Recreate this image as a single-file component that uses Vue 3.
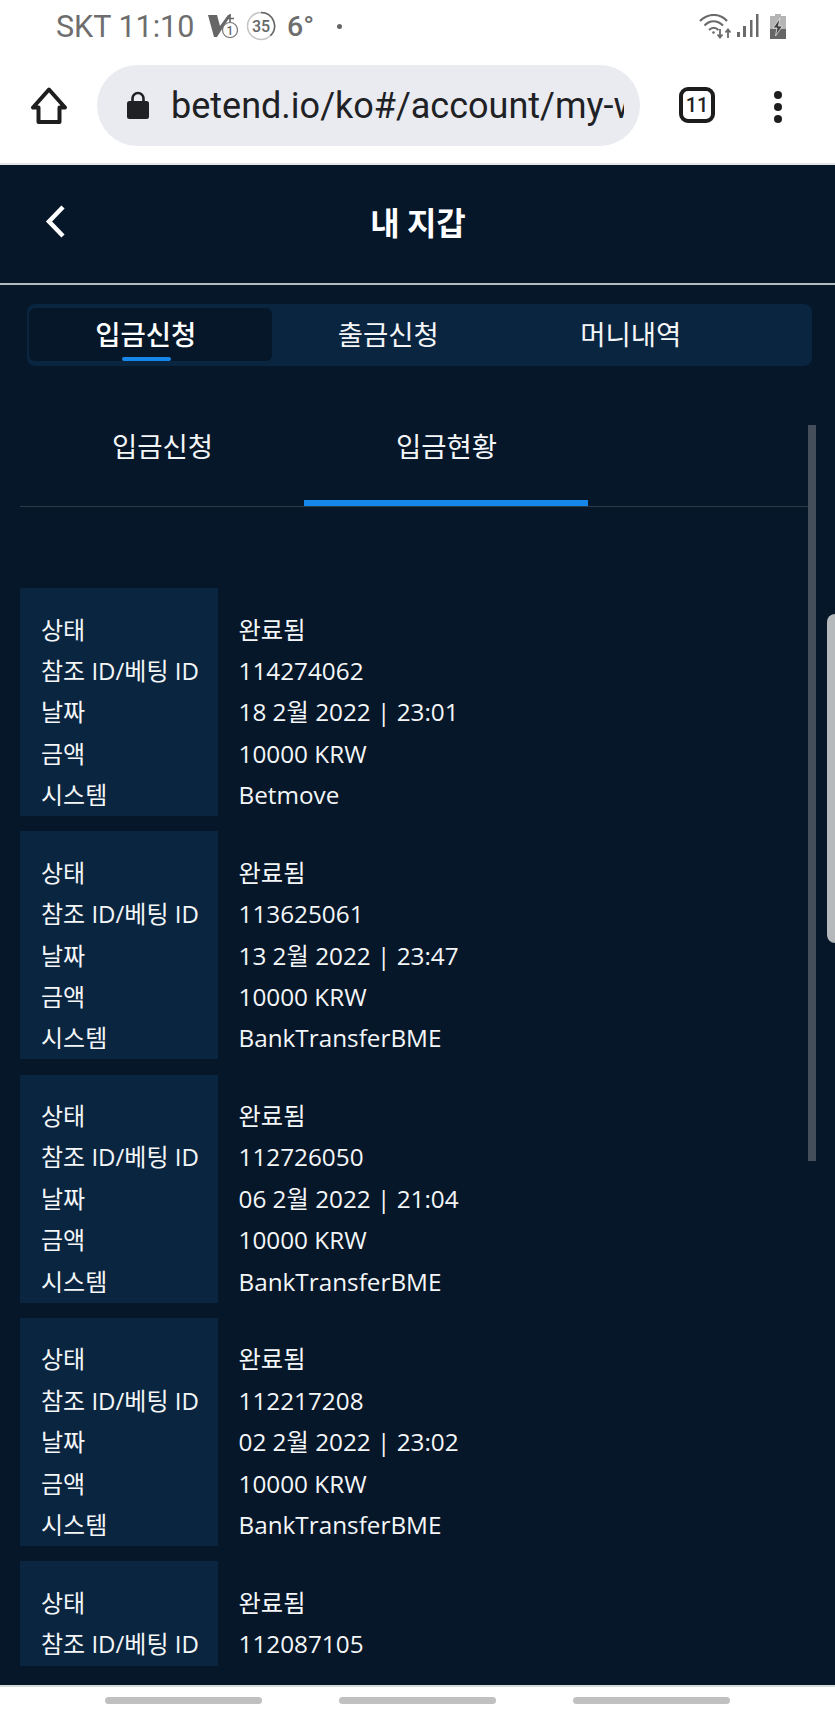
<script setup>
const mainTabs = ['입금신청', '출금신청', '머니내역']
const subTabs = ['입금신청', '입금현황']
const labels = ['상태', '참조 ID/베팅 ID', '날짜', '금액', '시스템']
const deposits = [
  ['완료됨', '114274062', '18 2월 2022 | 23:01', '10000 KRW', 'Betmove'],
  ['완료됨', '113625061', '13 2월 2022 | 23:47', '10000 KRW', 'BankTransferBME'],
  ['완료됨', '112726050', '06 2월 2022 | 21:04', '10000 KRW', 'BankTransferBME'],
  ['완료됨', '112217208', '02 2월 2022 | 23:02', '10000 KRW', 'BankTransferBME'],
  ['완료됨', '112087105']
]
</script>

<template>
  <div class="phone">
    <div class="status">
      <span class="carrier">SKT 11:10</span>
      <svg class="volte" width="30" height="24" viewBox="0 0 30 24">
        <path d="M0 1h9l3 11L20 1h3L9 23H6z" fill="#666" />
        <path d="M22 0v9M18 4.500h8" stroke="#666" stroke-width="1.600" />
        <circle cx="22" cy="16" r="7.500" fill="#fff" stroke="#777" stroke-width="1.200" />
        <text x="22" y="20.500" text-anchor="middle" class="svg-num small">1</text>
      </svg>
      <svg class="ring" width="30" height="30" viewBox="0 0 30 30">
        <circle cx="15" cy="15" r="13.500" fill="none" stroke="#c4c4c4" stroke-width="1.500" />
        <path d="M15 1.500A13.500 13.500 0 0 1 24.500 24.600" fill="none" stroke="#666" stroke-width="1.500" />
        <text x="15" y="21" text-anchor="middle" class="svg-num">35</text>
      </svg>
      <span class="temp">6°</span>
      <span class="dot"></span>
      <span class="spacer"></span>
      <svg width="33" height="25" viewBox="0 0 33 25" fill="none" stroke="#6a6a6a" stroke-width="2.200">
        <path d="M1 7C9 -1 21 -1 28 7" />
        <path d="M5.500 11.500C11 6 18 6 24 11.500" />
        <path d="M10 16C13 13 16.500 13 19.500 16" />
        <circle cx="14.500" cy="18.500" r="1.300" fill="#6a6a6a" stroke="none" />
        <path d="M21 15v8M18.500 20.500l2.500 3 2.500-3M29 24v-8M26.500 18.500l2.500-3 2.500 3" stroke-width="1.800" />
      </svg>
      <svg class="bars" width="22" height="24" viewBox="0 0 22 24" fill="#6a6a6a">
        <rect x="0" y="18" width="3" height="5" />
        <rect x="6" y="12" width="3" height="11" />
        <rect x="13" y="6" width="2.500" height="17" />
        <rect x="19" y="0" width="2.500" height="23" />
      </svg>
      <svg class="battery" width="18" height="25" viewBox="0 0 18 25">
        <path d="M6 0h6v2h5v23H1V2h5z" fill="#b4b4b4" />
        <rect x="1" y="15" width="16" height="10" fill="#666" />
        <path d="M11 4L4 14h4L6.500 22l7-10H9.500z" fill="#444" stroke="#e8e8e8" stroke-width=".8" />
      </svg>
    </div>

    <div class="toolbar">
      <svg class="home" width="36" height="37" viewBox="0 0 36 37" fill="none" stroke="#1e1e1e" stroke-width="4" stroke-linejoin="round">
        <path d="M18 2.500L2 20.500h5.500V35h21V20.500H34z" />
      </svg>
      <div class="omnibox">
        <svg class="lock" width="22" height="28" viewBox="0 0 22 28">
          <path d="M5.500 11V7.500a5.500 5.500 0 0 1 11 0V11" fill="none" stroke="#202124" stroke-width="2.600" />
          <rect x="0" y="10" width="22" height="18" rx="2.500" fill="#202124" />
        </svg>
        <span class="url">betend.io/ko#/account/my-w</span>
      </div>
      <div class="tabcount">11</div>
      <div class="kebab"><i></i><i></i><i></i></div>
    </div>

    <main class="app">
      <header class="title-bar">
        <svg class="back" width="20" height="33" viewBox="0 0 20 33" fill="none" stroke="#fff" stroke-width="4.500">
          <path d="M18 2L4 16.500 18 31" />
        </svg>
        <h1>내 지갑</h1>
      </header>

      <nav class="main-tabs">
        <div v-for="(tab, i) in mainTabs" :key="tab" class="main-tab" :class="{ active: i === 0 }">{{ tab }}</div>
      </nav>

      <section class="panel">
        <div class="sub-tabs">
          <div v-for="(tab, i) in subTabs" :key="tab" class="sub-tab" :class="{ active: i === 1 }">{{ tab }}</div>
        </div>
        <div class="list">
          <article v-for="(d, i) in deposits" :key="i" class="card" :class="{ cut: d.length < 5 }">
            <div class="labels">
              <div v-for="l in labels.slice(0, d.length)" :key="l" class="row">{{ l }}</div>
            </div>
            <div class="values">
              <div v-for="(v, j) in d" :key="j" class="row">{{ v }}</div>
            </div>
          </article>
        </div>
        <div class="scrollbar"></div>
      </section>
      <div class="edge-handle"></div>
    </main>

    <footer class="gesture">
      <span></span><span></span><span></span>
    </footer>
  </div>
</template>

<style>
html, body { margin: 0; background: #fff; overflow: hidden; }
</style>

<style scoped>
.phone {
  width: 835px;
  height: 1716px;
  display: flex;
  flex-direction: column;
  background: #fff;
  font-family: "Open Sans", "Noto Sans CJK KR", sans-serif;
  overflow: hidden;
}
.status {
  height: 52px;
  display: flex;
  align-items: center;
  padding: 0 48px 0 56px;
  box-sizing: border-box;
  color: #6e6e6e;
  font-family: Roboto, sans-serif;
  font-size: 28.5px;
}
.carrier { width: 152px; white-space: nowrap; font-size: 30.5px; }
.volte { flex: none; }
.ring { margin-left: 8px; flex: none; }
.temp { margin-left: 11px; font-weight: 500; }
.dot { width: 5px; height: 5px; border-radius: 50%; background: #666; margin-left: 23px; }
.spacer { flex: 1; }
.bars { margin-left: 5px; }
.battery { margin-left: 10px; }
.svg-num { font: 500 16px Roboto, sans-serif; fill: #666; }
.svg-num.small { font-size: 12px; }

.toolbar {
  height: 113px;
  display: flex;
  align-items: flex-start;
  box-sizing: border-box;
  padding-top: 13px;
  border-bottom: 2px solid #e3e5e6;
}
.home { margin: 22px 0 0 31px; flex: none; }
.omnibox {
  margin-left: 30px;
  width: 543px;
  height: 81px;
  border-radius: 41px;
  background: #e9ebf0;
  display: flex;
  align-items: center;
  box-sizing: border-box;
  padding-left: 30px;
  flex: none;
}
.lock { flex: none; margin-top: -2px; }
.url {
  margin-left: 22px;
  width: 453px;
  overflow: hidden;
  white-space: nowrap;
  font-family: Roboto, sans-serif;
  font-size: 36px;
  color: #202124;
}
.tabcount {
  margin: 22px 0 0 39px;
  width: 36px;
  height: 36px;
  box-sizing: border-box;
  border: 4px solid #1c1c1c;
  border-radius: 9px;
  font: 500 20px/28px Roboto, sans-serif;
  color: #222;
  text-align: center;
  flex: none;
}
.kebab {
  margin: 26px 0 0 59px;
  display: flex;
  flex-direction: column;
  gap: 4px;
}
.kebab i { width: 8px; height: 8px; border-radius: 50%; background: #1e1e1e; display: block; }

.app {
  position: relative;
  height: 1520px;
  flex: none;
  background: #051729;
  color: #f4f6f8;
  border-bottom: 2px solid #d5dadd;
}
.title-bar {
  height: 118px;
  border-bottom: 2px solid #b4bbc0;
  display: flex;
  align-items: center;
  justify-content: center;
  position: relative;
}
.back { position: absolute; left: 45px; top: 40px; }
h1 {
  margin: -5px 0 0 1px;
  font: 700 32px/1.4 "Noto Sans CJK KR", sans-serif;
  color: #fff;
}
.main-tabs {
  margin: 19px 23px 0 27px;
  height: 62px;
  box-sizing: border-box;
  padding: 4px 2px 5px;
  display: grid;
  grid-template-columns: repeat(3, 242.500px);
  background: #0a2540;
  border-radius: 8px;
}
.main-tab {
  position: relative;
  display: flex;
  align-items: center;
  justify-content: center;
  font: 400 27.500px/1 "Noto Sans CJK KR", sans-serif;
  border-radius: 6px;
  padding: 0 9px 1px 0;
}
.main-tab.active {
  background: #051729;
  font-weight: 500;
  color: #fff;
}
.main-tab.active::after {
  content: "";
  position: absolute;
  left: 50%;
  bottom: 0;
  width: 49px;
  height: 4px;
  margin-left: -28px;
  background: #1587ea;
  border-radius: 2px;
}
.panel {
  position: relative;
  margin-top: 59px;
  height: 1242px;
  overflow: hidden;
}
.sub-tabs {
  margin: 0 19px 0 20px;
  display: grid;
  grid-template-columns: 284px 284px;
  height: 81px;
  border-bottom: 1px solid #2b3a48;
}
.sub-tab {
  font: 400 27.500px/40px "Noto Sans CJK KR", sans-serif;
  text-align: center;
  padding-left: 1px;
}
.sub-tab.active { border-bottom: 6px solid #1587ea; }
.list {
  margin: 81px 0 0 20px;
  display: flex;
  flex-direction: column;
  gap: 15.300px;
}
.card { display: flex; font-size: 24px; height: 228px; }
.card.cut { height: 105px; }
.labels {
  width: 198px;
  box-sizing: border-box;
  padding: 20.500px 0 0 21px;
  background: #0a2540;
  white-space: nowrap;
}
.values { padding: 20.500px 0 0 20.500px; white-space: nowrap; font-size: 24.300px; }
.row { height: 41.400px; line-height: 41.400px; }
.scrollbar {
  position: absolute;
  left: 808px;
  top: 0;
  width: 8px;
  height: 736px;
  background: #434e5a;
}
.edge-handle {
  position: absolute;
  right: 0;
  top: 449px;
  width: 8px;
  height: 329px;
  background: #b5b9bc;
  border-radius: 9px 0 0 9px;
}
.gesture {
  flex: 1;
  display: flex;
  justify-content: flex-start;
  padding: 10px 0 0 105px;
  gap: 77px;
}
.gesture span {
  width: 157px;
  height: 7px;
  background: #c0c0c0;
  border-radius: 4px;
}
</style>
